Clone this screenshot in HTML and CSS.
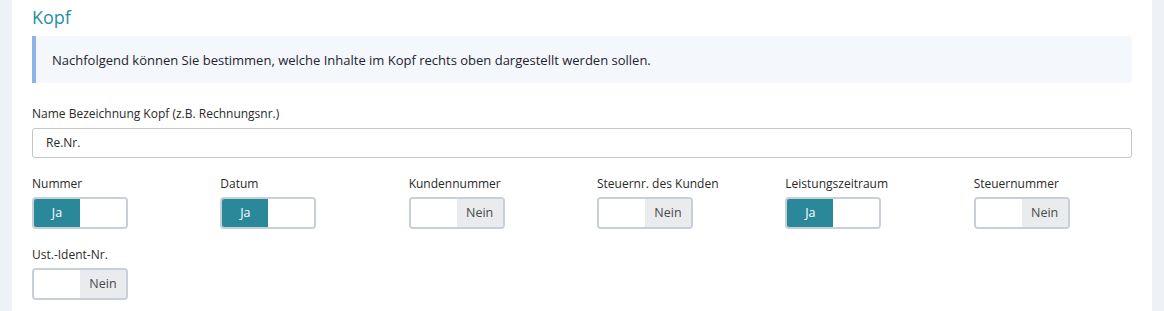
FILE: index.html
```html
<!DOCTYPE html>
<html lang="de">
<head>
<meta charset="utf-8">
<link rel="stylesheet" href="styles.css">
</head>
<body>
<div class="card">
  <h2 class="title">Kopf</h2>
  <div class="alert">Nachfolgend können Sie bestimmen, welche Inhalte im Kopf rechts oben dargestellt werden sollen.</div>
  <label class="label">Name Bezeichnung Kopf (z.B. Rechnungsnr.)</label>
  <div class="input">Re.Nr.</div>
  <div class="grid">
    <div class="col"><div class="label">Nummer</div><div class="toggle on"><span class="ja">Ja</span><span class="off"></span></div></div>
    <div class="col"><div class="label">Datum</div><div class="toggle on"><span class="ja">Ja</span><span class="off"></span></div></div>
    <div class="col"><div class="label">Kundennummer</div><div class="toggle"><span class="blank"></span><span class="nein">Nein</span></div></div>
    <div class="col"><div class="label">Steuernr. des Kunden</div><div class="toggle"><span class="blank"></span><span class="nein">Nein</span></div></div>
    <div class="col"><div class="label">Leistungszeitraum</div><div class="toggle on"><span class="ja">Ja</span><span class="off"></span></div></div>
    <div class="col"><div class="label">Steuernummer</div><div class="toggle"><span class="blank"></span><span class="nein">Nein</span></div></div>
    <div class="col"><div class="label">Ust.-Ident-Nr.</div><div class="toggle"><span class="blank"></span><span class="nein">Nein</span></div></div>
  </div>
</div>
</body>
</html>
```

FILE: styles.css
```css
html, body {
  margin: 0;
  padding: 0;
  background: #eef1f7;
  font-family: "Open Sans", "Noto Sans", sans-serif;
  color: #2a2a2a;
}
body {
  padding: 0 12px;
  height: 311px;
  overflow: hidden;
}
.card {
  background: #fff;
  padding: 4px 20px 0 20px;
  height: 311px;
  box-sizing: border-box;
}
.title {
  margin: 0;
  font-size: 18px;
  font-weight: 400;
  color: #2a8ea2;
  line-height: 26px;
  height: 32px;
}
.alert {
  background: #f4f7fc;
  border-left: 4px solid #8db4e8;
  border-radius: 0 4px 4px 0;
  padding: 0 16px;
  height: 47px;
  line-height: 48px;
  font-size: 13px;
  color: #1f2430;
  margin-bottom: 23px;
}
.label {
  display: block;
  font-size: 12px;
  line-height: 16px;
  color: #2a2a2a;
  margin-bottom: 6px;
}
.input {
  height: 30px;
  box-sizing: border-box;
  border: 1px solid #c6c6c6;
  border-radius: 3px;
  padding: 0 13px;
  font-size: 12px;
  line-height: 28px;
  color: #2a2a2a;
  margin-bottom: 18px;
}
.grid {
  display: grid;
  grid-template-columns: repeat(6, 1fr);
  margin: 0 -15px;
  row-gap: 18px;
}
.col {
  padding: 0 15px;
}
.col .label {
  margin-bottom: 5px;
}
.toggle {
  display: flex;
  width: 96px;
  height: 32px;
  box-sizing: border-box;
  border: 2px solid #c7cfdb;
  border-radius: 4px;
  overflow: hidden;
  font-size: 12.5px;
  line-height: 28px;
}
.toggle span {
  flex: 1;
  text-align: center;
}
.ja {
  background: #2a8899;
  color: #fff;
}
.off, .blank {
  background: #fff;
}
.nein {
  background: #e9ebef;
  color: #4a4a4a;
}
```
